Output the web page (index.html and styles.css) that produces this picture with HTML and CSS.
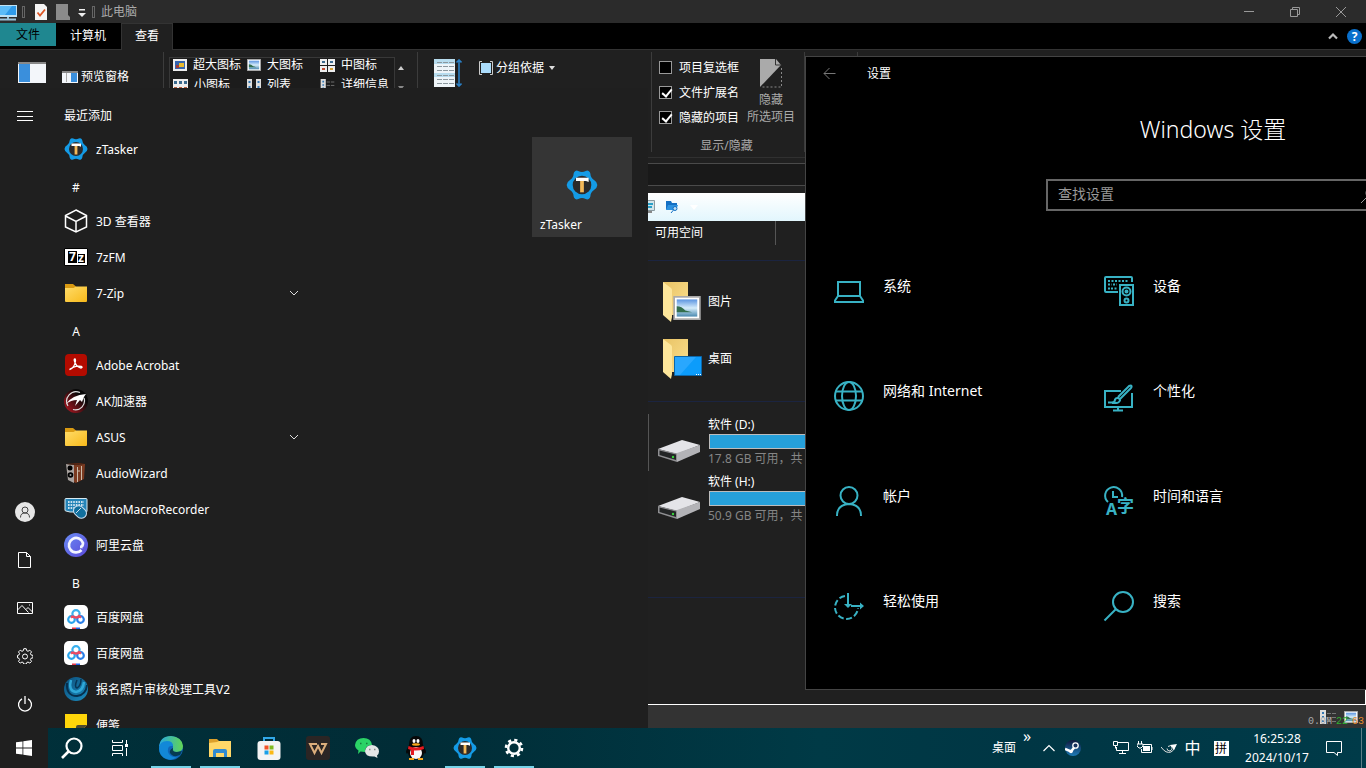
FILE: index.html
```html
<!DOCTYPE html>
<html lang="zh-CN">
<head>
  <meta charset="UTF-8" />
  <meta name="viewport" content="width=device-width, initial-scale=1.0" />
  <title>此电脑</title>
  <link rel="stylesheet" href="styles.css">
</head>
<body>

<!-- shared icons -->
<svg class="defs" aria-hidden="true">
  <defs>
    <linearGradient id="gFolder" x1="0" y1="0" x2="1" y2="1"><stop offset="0" stop-color="#ffdc69"/><stop offset="1" stop-color="#f7b91a"/></linearGradient>
    <linearGradient id="gBig" x1="0" y1="0" x2="1" y2="1"><stop offset="0" stop-color="#e9c365"/><stop offset="1" stop-color="#fbe08f"/></linearGradient>
    <linearGradient id="gSky" x1="0" y1="0" x2="0" y2="1"><stop offset="0" stop-color="#5b94e0"/><stop offset=".5" stop-color="#d5ecfa"/><stop offset="1" stop-color="#4b8ab0"/></linearGradient>
    <linearGradient id="gEdge" x1="0" y1="0" x2="1" y2="0"><stop offset="0" stop-color="#27a7e0"/><stop offset="1" stop-color="#63d653"/></linearGradient>
    <linearGradient id="gAli" x1="0" y1="0" x2="1" y2="1"><stop offset="0" stop-color="#6a8cf5"/><stop offset="1" stop-color="#5a48d8"/></linearGradient>
    <linearGradient id="gPhoto" x1="0" y1="0" x2="1" y2="1"><stop offset="0" stop-color="#0c4d78"/><stop offset="1" stop-color="#1b8ec2"/></linearGradient>
    <linearGradient id="gAk" x1="1" y1="0" x2="0" y2="1"><stop offset=".3" stop-color="#080808"/><stop offset="1" stop-color="#c01824"/></linearGradient>
    <linearGradient id="gSteam" x1="0" y1="0" x2="0" y2="1"><stop offset="0" stop-color="#10173c"/><stop offset="1" stop-color="#1d7cb8"/></linearGradient>
  </defs>
  <symbol id="ztasker" viewBox="0 0 24 24">
    <path fill="#149be6" d="M7 1.500q1-.6 2.200 0 2.800 1.500 5.600 0 1.200-.6 2.200 0 1.200.8 1.300 2 .1 3 2.700 4.700 2.300 1.300 2.500 3.800-.2 2.500-2.500 3.800-2.600 1.700-2.700 4.700-.1 1.200-1.300 2-1 .6-2.200 0-2.800-1.500-5.600 0-1.200.6-2.200 0-1.200-.8-1.300-2-.1-3-2.700-4.700Q.7 14.500.5 12q.2-2.500 2.500-3.800 2.600-1.700 2.700-4.700.1-1.200 1.300-2z"/>
    <circle cx="12" cy="12" r="7" fill="#2b2a2b"/>
    <rect x="10.600" y="9" width="2.800" height="8.500" fill="#f3b85a"/>
    <path fill="#fff" d="M7.500 6.500h9.500v3.200l-2-.7h-7.500z"/>
  </symbol>
  <symbol id="folder" viewBox="0 0 24 24">
    <path fill="#d99a12" d="M1 3h8l3 2.500v3H1z"/>
    <path fill="url(#gFolder)" d="M1 7h8.500l2.500-1.500h11V20q0 1-1 1H2q-1 0-1-1z"/>
  </symbol>
  <symbol id="baidu" viewBox="0 0 24 24">
    <rect width="24" height="24" rx="5" fill="#fff"/>
    <g fill="none" stroke-width="2.200">
      <circle cx="7.500" cy="14.500" r="3.300" stroke="#2aa5ec"/>
      <circle cx="16.500" cy="14.500" r="3.300" stroke="#2a7fe8"/>
      <circle cx="12" cy="8.700" r="3.600" stroke="#39b1ee"/>
      <path d="M9 11a3.700 3.700 0 0 0 6 0l2 1.500M9 11l-2 1.500" stroke="#ee4a62"/>
    </g>
    <path fill="#e8384a" d="M8 22.500h4V24H8z"/><path fill="#2468e8" d="M12 22.500h4V24h-4z"/>
  </symbol>
  <symbol id="chevron" viewBox="0 0 10 10"><path d="M1 3l4 4 4-4" fill="none" stroke="#ddd"/></symbol>
  <symbol id="drive" viewBox="0 0 42 24">
    <path fill="#e4e4e8" d="M0 10L24 1l18 5-23 9z"/>
    <path fill="#b3b3b7" d="M19 14l23-8v7l-23 10z"/>
    <path fill="#8f8f92" d="M0 10l19 4.500V23L0 17z"/>
    <path fill="#232526" d="M1.500 11.500L18 15.500v5.500L1.500 16z"/>
    <circle cx="15" cy="18" r="1.200" fill="#38d03a"/>
  </symbol>
  <symbol id="bigfolder" viewBox="0 0 40 42">
    <path fill="url(#gBig)" d="M1 1h25v33H9z"/>
    <path fill="#fde69b" d="M1 1l8 6q1 1 1 2v27l-1 5-8-7z"/>
  </symbol>
  <symbol id="picture" viewBox="0 0 16 14">
    <rect x=".5" y=".5" width="15" height="13" fill="#fff" stroke="#aaa"/>
    <rect x="2" y="2" width="12" height="10" fill="url(#gSky)"/>
    <path fill="#336e4c" d="M2 6q3 0 5 2.500l4 1H2z"/>
  </symbol>
  <symbol id="details" viewBox="0 0 16 14">
    <path fill="#ddd" d="M0 0h6v14H0z"/><path fill="#3478b4" d="M2 2h2v2H2zM2 6h2v2H2zM2 10h2v2H2z"/>
    <path stroke="#777" d="M7 3.500h4M12 3.500h4M7 7.500h4M12 7.500h4M7 11.500h4M12 11.500h4"/>
  </symbol>
</svg>

<div class="desktop">

  <!-- file explorer -->
  <section class="explorer">
    <header class="titlebar">
      <svg width="18" height="18" viewBox="0 0 18 18"><path fill="#bfe2f5" d="M0 2h17v12H0z"/><path fill="#2f9bea" d="M0 3h16v9H0z"/><path fill="#5cbcf8" d="M0 3h12L5 12H0z"/><path stroke="#9cc4da" stroke-width="2" d="M8 14v2M0 16.500h16"/></svg>
      <i class="grip"></i>
      <svg class="doc" width="14" height="16" viewBox="0 0 14 16"><path fill="#f5f5f5" d="M1 0h9l3 3v13H1z"/><path d="M3.500 8.500l2.500 3 5-6" fill="none" stroke="#de5726" stroke-width="1.800"/></svg>
      <svg class="doc2" width="14" height="16" viewBox="0 0 14 16"><path fill="#8b8b8b" d="M0 0h12v11l2 2v3H0z"/></svg>
      <svg class="qat" width="8" height="8" viewBox="0 0 8 8"><path fill="#eee" d="M1 0h6v1.500H1zM0 4h8L4 8z"/></svg>
      <i class="grip"></i>
      <span class="title">此电脑</span>
      <div class="controls">
        <button aria-label="最小化"><svg width="12" height="12"><path d="M1 5.500h10" stroke="#999"/></svg></button>
        <button aria-label="还原"><svg width="12" height="12"><path d="M1.500 3.500h7v7h-7zM3.500 3V1.500h7v7H9" fill="none" stroke="#999"/></svg></button>
        <button aria-label="关闭"><svg width="12" height="12"><path d="M1 1l10 10M11 1L1 11" stroke="#999"/></svg></button>
      </div>
    </header>

    <nav class="tabs">
      <button class="tab file">文件</button>
      <button class="tab computer">计算机</button>
      <button class="tab active">查看</button>
      <div class="help">
        <svg width="12" height="12"><path d="M2 8.500l4-4 4 4" fill="none" stroke="#bbb" stroke-width="2.200"/></svg>
        <span class="question">?</span>
      </div>
    </nav>

    <div class="ribbon">
      <div class="group panes">
        <svg class="navpane" width="28" height="21"><path fill="#f3f6fa" d="M0 0h28v21H0z"/><path fill="#888" d="M0 0h28v2H0z"/><path fill="#3a8fdc" d="M1 2h11v18H1z"/></svg>
        <button><svg width="16" height="12"><path fill="#f3f6fa" d="M0 0h16v12H0z"/><path fill="#888" d="M0 0h16v2H0z"/><path fill="#3a8fdc" d="M9 2h6v9H9z"/><path stroke="#aaa" d="M4.500 2v9"/></svg>预览窗格</button>
      </div>
      <div class="group layouts">
        <div class="gallery">
          <button><svg width="14" height="12"><path fill="#eee" d="M0 0h14v12H0z"/><path fill="#3464ae" d="M2 2h10v8H2z"/><path fill="#e8b92e" d="M6 4h5v4H6z"/><path fill="#a13a3a" d="M3 6h3v3H3z"/></svg>超大图标</button>
          <button><svg width="14" height="12"><use href="#picture"/></svg>大图标</button>
          <button><svg width="15" height="13"><path fill="#eee" d="M0 0h7v6H0zM8 0h7v6H8zM0 7h7v6H0zM8 7h7v6H8z"/><path fill="#3b6a8e" d="M2 2h3v2H2zM10 2h3v2h-3z"/><path fill="#c04b32" d="M2 9h3v2H2z"/><path fill="#d39b30" d="M10 9h3v2h-3z"/></svg>中图标</button>
          <button><svg width="15" height="13"><path fill="#eee" d="M0 0h15v13H0z"/><path fill="#3b6a8e" d="M1 2h3v3H1zM6 2h3v3H6zM11 2h3v3h-3z"/><path fill="#b75c3c" d="M1 8h3v3H1zM6 8h3v3H6zM11 8h3v3h-3z"/></svg>小图标</button>
          <button><svg width="14" height="12"><path fill="#ddd" d="M0 0h5v12H0zM9 0h5v12H9z"/><path fill="#3478b4" d="M1.500 2h2v2h-2zM1.500 7h2v2h-2zM10.500 2h2v2h-2zM10.500 7h2v2h-2z"/></svg>列表</button>
          <button><svg width="15" height="12"><use href="#details"/></svg>详细信息</button>
        </div>
        <div class="scroller"><svg width="6" height="4"><path fill="#ccc" d="M0 4l3-4 3 4z"/></svg><svg width="6" height="4"><path fill="#888" d="M0 0h6L3 4z"/></svg></div>
      </div>
      <div class="group view">
        <svg width="28" height="28"><path fill="#eef4f8" d="M0 0h21v28H0z"/><path fill="#b7dcee" d="M0 0h21v5H0zM0 14h21v4H0z"/><path stroke="#8b979d" stroke-dasharray="5 1" d="M3 3.500h17M3 7.500h17M3 11.500h17M3 16.500h17M3 20.500h17M3 24.500h17"/><path d="M25 2v24M22.500 3.500L25 1l2.500 2.500M22.500 24.500L25 27l2.500-2.500" stroke="#2a7fc4" stroke-width="1.600" fill="none"/></svg>
        <div class="stack">
          <button><svg width="14" height="14"><path d="M3 .5H.5v13H3M11 .5h2.500v13H11" fill="none" stroke="#ccc"/><path fill="#aadcfb" d="M2 2h10v10H2z"/></svg>分组依据<svg width="6" height="4"><path fill="#ddd" d="M0 0h6L3 4z"/></svg></button>
          <button><svg width="14" height="14"><path stroke="#aaa" stroke-width="2" d="M6 6h6M9 4v6"/></svg>添加列</button>
        </div>
      </div>
      <div class="group showhide">
        <div class="row">
          <div class="checks">
            <label><input type="checkbox">项目复选框</label>
            <label><input type="checkbox" checked>文件扩展名</label>
            <label><input type="checkbox" checked>隐藏的项目</label>
          </div>
          <button class="hide-items"><svg width="22" height="29"><path fill="#aaa" d="M0 0h16l5 6L0 28z"/><path fill="none" stroke="#333" d="M15.500 0v6h6"/><path d="M21.500 9v19H2" fill="none" stroke="#888" stroke-dasharray="2 2"/></svg><span>隐藏<br>所选项目</span></button>
        </div>
        <div class="caption">显示/隐藏</div>
      </div>
      <div class="group"></div>
    </div>

    <div class="address"></div>

    <div class="content">
      <aside class="navtree"></aside>
      <main class="files">
        <div class="toolbar">
          <svg width="7" height="14"><path fill="#d2e4ea" stroke="#8a9aa0" d="M-4 .5H6.500v10H-4z"/><path stroke="#2aa0c8" stroke-width="2" d="M0 4h5M0 7h4"/><path stroke="#888" stroke-width="2" d="M0 12h4"/></svg>
          <svg width="13" height="12"><path fill="#1470c4" d="M0 0h5l1 2h5v4H3L0 9z"/><path fill="#2d92e0" d="M2 4h10l-2 5H0z"/><circle cx="9" cy="7.500" r="2" fill="#bfe0f5" stroke="#1470c4"/><path stroke="#1470c4" d="M7.500 9L5 12"/></svg>
          <svg width="8" height="5"><path fill="#fff" d="M0 0h8L4 5z"/></svg>
        </div>
        <div class="colhead"><span>可用空间</span></div>
        <section class="items">
          <div class="item"><svg width="40" height="42"><use href="#bigfolder"/><use href="#picture" x="11" y="15" width="28" height="24"/></svg><span>图片</span></div>
          <div class="item"><svg width="40" height="42"><use href="#bigfolder"/><path fill="#0c9cfb" stroke="#0b67aa" d="M12.500 18.500h27v19h-27z"/><path fill="#36adff" d="M13 19h21L18 37h-5z" opacity=".7"/><path stroke="#fff" stroke-dasharray="1 1" d="M34 36.500h5"/></svg><span>桌面</span></div>
        </section>
        <section class="items drives">
          <div class="item"><svg width="42" height="24"><use href="#drive"/></svg><div class="info">软件 (D:)<div class="bar"></div><small>17.8 GB 可用，共</small></div></div>
          <div class="item"><svg width="42" height="24"><use href="#drive"/></svg><div class="info">软件 (H:)<div class="bar"></div><small>50.9 GB 可用，共</small></div></div>
        </section>
        <section class="items"></section>
      </main>
    </div>

    <footer class="status">
      <svg width="16" height="14"><use href="#details"/></svg>
      <svg width="14" height="12"><use href="#picture"/></svg>
    </footer>
  </section>

  <!-- settings window, runs past the right edge of the screen -->
  <section class="settings">
    <header>
      <button aria-label="返回"><svg width="13" height="13"><path d="M1 6.500h11.500M6.500 1L1 6.500 6.500 12" fill="none" stroke="#777"/></svg></button>
      <span>设置</span>
    </header>
    <h1>Windows 设置</h1>
    <div class="search">
      <input type="text" placeholder="查找设置" aria-label="查找设置">
      <svg width="16" height="16"><circle cx="10" cy="6" r="5" fill="none" stroke="#999"/><path d="M6 10L0 16" stroke="#999"/></svg>
    </div>
    <nav class="categories">
      <a href="#"><svg viewBox="0 0 30 30"><path d="M4 6h22v14H4zM4 20l-3 4.500V26h28v-1.500L26 20"/></svg>系统</a>
      <a href="#"><svg viewBox="0 0 30 30"><path d="M14 16H2q-1 0-1-1V2q0-1 1-1h25q1 0 1 1v4M16 9h13v20H16z"/><path d="M4 5h20M4 8.500h4M9 8.500h4M4 12.500h2M7 12.500h6" stroke-dasharray="2 1.500"/><circle cx="22.500" cy="15.500" r="4"/><circle cx="22.500" cy="15.500" r="1"/><circle cx="22.500" cy="24.500" r="2"/></svg>设备</a>
      <a href="#"><svg viewBox="0 0 30 30"><circle cx="15" cy="15" r="14"/><ellipse cx="15" cy="15" rx="7" ry="14"/><path d="M2 10.500h26M2 19.500h26"/></svg>网络和 Internet</a>
      <a href="#"><svg viewBox="0 0 30 30"><path d="M17 10H1v16h27V12M14 26v3.500M9 29.500h10M4 21.500h4q3 0 3-3 1-2 3-1.500t2 2.500q-1 2.500-4 2.500H8M14 16L25 5q2-1 2.500 0 .5 1-.5 2L16 18"/></svg>个性化</a>
      <a href="#"><svg viewBox="0 0 30 30"><circle cx="15" cy="9.500" r="8.500"/><path d="M3 30q0-11.500 12-12 12 .5 12 12"/></svg>帐户</a>
      <a href="#"><svg viewBox="0 0 30 30"><path d="M4 16A8.500 8.500 0 1 1 18 11M9 5v6h5"/><text x="2" y="29" font-size="16">A</text><text x="13" y="26" font-size="17">字</text></svg>时间和语言</a>
      <a href="#"><svg viewBox="0 0 30 30"><path d="M11 5A11.500 11.500 0 1 0 24 17" stroke-dasharray="6 2.500"/><path d="M14 2v13M17 15h12"/><path class="solid" d="M10 13h8l-4 4zM26 11.500v7l4-3.500z"/></svg>轻松使用</a>
      <a href="#"><svg viewBox="0 0 30 30"><circle cx="19" cy="11" r="10"/><path d="M12 18L.5 29.500"/></svg>搜索</a>
    </nav>
  </section>

  <!-- start menu -->
  <section class="start">
    <div class="rail">
      <button aria-label="展开"><svg width="16" height="16"><path d="M0 3.500h16M0 8.500h16M0 12.500h16" stroke="#fff"/></svg></button>
      <button class="user" aria-label="帐户"><svg width="20" height="20"><circle cx="10" cy="10" r="10" fill="#e6e6e6"/><circle cx="10" cy="8" r="3" fill="none" stroke="#444"/><path d="M5.500 15.500q0-4.500 4.500-4.500t4.500 4.500" fill="none" stroke="#444"/></svg></button>
      <button aria-label="文档"><svg width="16" height="16"><path d="M1.500.5h8l4 4v11h-12zM9.500.5v4h4" fill="none" stroke="#fff"/></svg></button>
      <button aria-label="图片"><svg width="16" height="16"><path d="M.5 2.500h15v11H.5zM.5 10l4.500-4.500 6.500 7M9 9.500l2-2 4.500 4.500M12 5h1" fill="none" stroke="#fff"/></svg></button>
      <button aria-label="设置"><svg width="16" height="16" viewBox="0 0 16 16" fill="none" stroke="#fff"><path d="M6.800.7h2.400l.5 2 1.300.6 1.800-1.100 1.700 1.700-1.100 1.800.6 1.200 2 .5v2.400l-2 .5-.6 1.300 1.100 1.800-1.700 1.700-1.800-1.100-1.300.6-.5 1.500H6.800l-.5-1.500-1.300-.6-1.800 1.100-1.700-1.700 1.100-1.800-.6-1.300-1.500-.5V7.400l1.500-.5.6-1.200-1.100-1.800 1.700-1.700L5 3.300l1.300-.6z"/><circle cx="8" cy="8.500" r="2.500"/></svg></button>
      <button aria-label="电源"><svg width="16" height="16"><path d="M5 2.800a6.500 6.500 0 1 0 6 0M8 0v8" fill="none" stroke="#fff" stroke-width="1.300"/></svg></button>
    </div>
    <div class="applist">
      <div class="letter recent">最近添加</div>
      <button><svg><use href="#ztasker"/></svg><span>zTasker</span></button>
      <div class="letter">#</div>
      <button><svg viewBox="0 0 24 24"><path d="M12 1l10.500 5.500v11.500L12 23 1.500 18V6.500zM1.500 7L12 12.500 22.500 7M12 12.500V23" fill="none" stroke="#fff" stroke-width="1.500"/></svg><span>3D 查看器</span></button>
      <button><svg viewBox="0 0 24 24"><path d="M.5 3.500h23v17H.5z" fill="#fff" stroke="#000"/><path d="M4 6h9v12H4z"/><path d="M14 9h7v9h-7z"/><text x="5" y="16" font-size="12" font-weight="bold" fill="#fff">7</text><text x="14" y="17" font-size="12" font-weight="bold" fill="#fff">z</text></svg><span>7zFM</span></button>
      <button><svg><use href="#folder"/></svg><span>7-Zip</span><svg class="chev"><use href="#chevron"/></svg></button>
      <div class="letter">A</div>
      <button><svg viewBox="0 0 24 24"><rect x="1" y="1" width="22" height="22" rx="4" fill="#b30b00"/><path d="M6 16.500q4.500-2 5.500-8.500 0-2.500-1-2-1 1 1 4.500 2 4 5.500 4.500 2-.5.500-1.500-4-1-8.500 1-3.500 1.500-3 2z" fill="none" stroke="#fff" stroke-width="1.300"/></svg><span>Adobe Acrobat</span></button>
      <button><svg viewBox="0 0 24 24"><circle cx="12" cy="12" r="12" fill="url(#gAk)"/><path d="M4 17A9.500 9.500 0 0 1 16 3.500M20 9A9 9 0 0 1 9 20.500" fill="none" stroke="#ddd" stroke-width="1.200"/><path d="M2 15Q8 6 22 5q-2 2-4 8l-2-2-5 6 2-6q-6 0-11 4z" fill="#fff"/></svg><span>AK加速器</span></button>
      <button><svg><use href="#folder"/></svg><span>ASUS</span><svg class="chev"><use href="#chevron"/></svg></button>
      <button><svg viewBox="0 0 24 24"><path fill="#a9a3a0" d="M2 3l8 1v18L4 19z"/><path fill="#7a3a20" d="M10 4l11-1-1 15-8 4-2-1z"/><path fill="#572613" d="M2 3l10-1h9l-9 2z"/><circle cx="6" cy="7" r="2.500"/><circle cx="6.500" cy="14" r="2.800"/><circle cx="6.500" cy="14" r="1" fill="#999"/><path stroke="#cba" d="M13.500 6v15M17.500 5v14M14 10h2"/></svg><span>AudioWizard</span></button>
      <button><svg viewBox="0 0 24 24"><path d="M2 1.500h20q1 0 1 1V14q0 1-1 1H6l-4-1q-1 0-1-1V2.500q0-1 1-1z" fill="#2584b8" stroke="#d8eaf2"/><path d="M4 5h16M4 8h16M4 11h10" stroke="#fff" stroke-width="1.600" stroke-dasharray="1.600 1"/><rect x="9" y="10" width="14" height="10" rx="5" transform="rotate(42 16 15)" fill="#116f9d" stroke="#cde"/><path d="M12 16l5-5" stroke="#cde"/></svg><span>AutoMacroRecorder</span></button>
      <button><svg viewBox="0 0 24 24"><circle cx="12" cy="12" r="12" fill="url(#gAli)"/><path d="M17.500 17A7.200 7.200 0 1 1 19 10q0 4-3 4h3" fill="none" stroke="#f2f4ff" stroke-width="2.700"/></svg><span>阿里云盘</span></button>
      <div class="letter">B</div>
      <button><svg><use href="#baidu"/></svg><span>百度网盘</span></button>
      <button><svg><use href="#baidu"/></svg><span>百度网盘</span></button>
      <button><svg viewBox="0 0 24 24"><circle cx="12" cy="12" r="12" fill="url(#gPhoto)"/><path d="M3 6q-1 13 10 13 9-1 10-11" fill="none" stroke="#06304e" stroke-width="2"/><path d="M7 3q-3 11 5 12 7-1 8-10" fill="none" stroke="#2fa8d8" stroke-width="2.500"/><path d="M13 3q-3 7 0 8 4-2 4-9" fill="none" stroke="#073656" stroke-width="1.500"/></svg><span>报名照片审核处理工具V2</span></button>
      <button><svg viewBox="0 0 24 24"><path fill="#ffd60a" d="M1 1h22v11l-11 11H1z"/><path fill="#4c4a30" d="M23 12H14q-2 0-2 2v9z"/></svg><span>便笺</span></button>
    </div>
    <div class="tiles">
      <button class="tile"><svg width="32" height="32"><use href="#ztasker"/></svg><span>zTasker</span></button>
    </div>
  </section>

  <footer class="taskbar">
    <button class="startbtn" aria-label="开始"><svg width="16" height="16"><path fill="#fff" d="M0 2.300L6.500 1.400v6.200H0zM7.300 1.200L16 0v7.600H7.300zM0 8.400h6.500v6.200L0 13.700zM7.300 8.400H16V16l-8.700-1.200z"/></svg></button>
    <button aria-label="搜索"><svg width="24" height="24"><circle cx="14" cy="10" r="7.500" fill="none" stroke="#fff" stroke-width="2.200"/><path d="M8.500 15.500L2 22" stroke="#fff" stroke-width="2.600"/></svg></button>
    <button aria-label="任务视图"><svg width="16" height="16"><path d="M.5 0v2.500h10V0M.5 5.500h10v5H.5zM.5 16v-2.500h10V16M14.500 0v4M14.500 8v8" fill="none" stroke="#fff"/><path fill="#fff" d="M13 4h3v3h-3z"/></svg></button>
    <div class="apps">
      <button class="open" aria-label="Edge"><svg viewBox="0 0 24 24"><circle cx="12" cy="12" r="12" fill="#0f66b8"/><path fill="url(#gEdge)" d="M0 11Q1 0 12 0q11 1 12 10 0 6-7 6-5 0-3-3 1-6-5-7-6 0-9 5z"/><path fill="#1288d8" d="M0 12q1-7 8-7 6 0 6 5-6-1-5 6 2 6 9 5-5 4-10 2-8-2-8-11z"/><path fill="#053541" d="M14 12q-1 4 4 4l5-1-2 4q-7 3-10-2-1-3 3-5z" opacity=".85"/></svg></button>
      <button class="open" aria-label="文件资源管理器"><svg viewBox="0 0 24 24"><path fill="#dca02b" d="M1 3h8l2 2v4H1z"/><path fill="#ffd768" d="M1 7l8-1 2-1h12v16H1z"/><path fill="#318bd0" d="M5 21v-6q0-2 2-2h10q2 0 2 2v6h-3v-4H8v4z"/></svg></button>
      <button aria-label="Microsoft Store"><svg viewBox="0 0 24 24"><path d="M7 6V2h10v4" fill="none" stroke="#32a8e8" stroke-width="2"/><rect x=".5" y="5" width="23" height="19" rx="3" fill="#f4f4f4"/><path fill="#f15328" d="M7.500 9.500h4v4h-4z"/><path fill="#7fba20" d="M12.500 9.500h4v4h-4z"/><path fill="#1aa0e8" d="M7.500 14.500h4v4h-4z"/><path fill="#fbb914" d="M12.500 14.500h4v4h-4z"/></svg></button>
      <button aria-label="WPS"><svg viewBox="0 0 24 24"><rect width="24" height="24" rx="3" fill="#2b2524"/><path d="M11 8H4l4.500 9L12 10l3.500 7L20 8h-5" fill="none" stroke="#dcae7c" stroke-width="2"/></svg></button>
      <button aria-label="微信"><svg viewBox="0 0 24 24"><path fill="#2bd366" d="M8.500 2Q16 2 17 9q-7 0-7 7l-4.500-.5L3 18l.5-3.500Q0 12 0 9q1-7 8.500-7z"/><path fill="#e3e6e6" d="M17 9q7 1 7 6.500 0 2.500-2 4l.5 2.500-3-1.500Q10 21 10 15q1-6 7-6z"/><path d="M5 7.500h1.500M11 7.500h1.500" stroke="#157d3d" stroke-width="1.500"/><path d="M14 13.500h1.500M19 13.500h1.500" stroke="#888" stroke-width="1.300"/></svg></button>
      <button aria-label="QQ"><svg viewBox="0 0 24 24"><path fill="#080808" d="M12 0q7 0 7 9l3 6q0 4-2 2-1 5-4 6H8q-3-1-4-6-2 2-2-2l3-6q0-9 7-9z"/><ellipse cx="12" cy="17" rx="6" ry="6" fill="#f8f8f8"/><ellipse cx="10" cy="5" rx="1.500" ry="2" fill="#fff"/><ellipse cx="14" cy="5" rx="1.500" ry="2" fill="#fff"/><ellipse cx="12" cy="8.500" rx="4" ry="1.200" fill="#f9a81c"/><path fill="#e41a20" d="M4.500 10q7.500 3 15 0l.5 3q-5 2-10 1.500V19H7v-5l-3-1z"/><path stroke="#f9a81c" stroke-width="2" d="M5 23h5M14 23h5"/></svg></button>
      <button class="open" aria-label="zTasker"><svg><use href="#ztasker"/></svg></button>
      <button class="open" aria-label="设置"><svg viewBox="0 0 24 24"><circle cx="12" cy="12" r="5.800" fill="none" stroke="#fff" stroke-width="2.400"/><circle cx="12" cy="12" r="8" fill="none" stroke="#fff" stroke-width="2.600" stroke-dasharray="3.140 3.140"/></svg></button>
    </div>
    <div class="tray">
      <span class="deskbar">桌面</span><span class="more">»</span>
      <button aria-label="显示隐藏的图标"><svg width="14" height="14"><path d="M1.500 10L7 4.500l5.500 5.500" fill="none" stroke="#fff" stroke-width="1.200"/></svg></button>
      <button class="steam" aria-label="Steam"><svg width="16" height="16"><circle cx="8" cy="8" r="8" fill="url(#gSteam)"/><path d="M0 9l6 2.500 4-5" fill="none" stroke="#fff" stroke-width="2.500"/><circle cx="10.500" cy="5.500" r="2.700" fill="#17305c" stroke="#fff" stroke-width="1.300"/><circle cx="6" cy="11.500" r="1.800" fill="#fff"/></svg></button>
      <button aria-label="网络"><svg width="16" height="16"><path d="M5 2.500h10.500v8h-12V7M9.500 10.500v3M6 13.500h7M.5 1.500h4v4h-4zM2.500 5.500v3" fill="none" stroke="#fff"/></svg></button>
      <button aria-label="电池"><svg width="16" height="16"><path d="M6 4.500h8.500v8H4.500V9M15 7v3M1.500 1v3M4.500 1v3M0 4h6v2L4 8H2L0 6z" fill="none" stroke="#fff"/><path fill="#fff" d="M6 6h7v5H6z"/></svg></button>
      <button aria-label="音频"><svg width="16" height="16"><path d="M0 7q5 7 10 5 3-1 4-6M7 6.500q3-2 4 .5t-2 4q-3 0-3-2.500" fill="none" stroke="#ddd"/><path fill="#fff" d="M9 5l7-1-3 6-2-3z"/></svg></button>
      <button class="ime">中</button>
      <button class="pinyin"><span>拼</span></button>
      <button class="clock">16:25:28<br>2024/10/17</button>
      <button class="notice" aria-label="通知"><svg width="18" height="18"><path d="M1.500 2.500h15v11h-4v3l-3.500-3H1.500z" fill="none" stroke="#fff"/></svg></button>
      <i class="peek"></i>
    </div>
  </footer>

  <div class="meter"><span>0.0M</span><b>22</b><em>63</em></div>
</div>

</body>
</html>
```

FILE: styles.css
```css
* {
  box-sizing: border-box;
}

body {
  margin: 0;
  font-family: "Noto Sans", "Noto Sans CJK SC", sans-serif;
  font-size: 12px;
  line-height: 16px;
  color: #fff;
  background: #000;
}

button {
  font: inherit;
  color: inherit;
  background: none;
  border: none;
  padding: 0;
  display: flex;
  align-items: center;
  white-space: nowrap;
}

svg {
  flex: none;
  display: block;
}

.defs {
  position: absolute;
  width: 0;
  height: 0;
}

.desktop {
  position: relative;
  display: flex;
  flex-direction: column;
  height: 100vh;
  overflow: hidden;
}

/* explorer */
.explorer {
  flex: 1;
  min-height: 0;
  display: flex;
  flex-direction: column;
  background: #202020;
}

.titlebar {
  display: flex;
  align-items: center;
  height: 23px;
  background: #2b2b2b;
}

.grip {
  width: 3px;
  height: 12px;
  margin: 0 4px;
  border: 1px solid #666;
}

.doc {
  margin-left: 5px;
}

.doc2 {
  margin-left: 8px;
}

.qat {
  margin: 3px 2px 0 8px;
}

.title {
  margin-left: 2px;
  color: #aaa;
}

.controls {
  display: flex;
  margin-left: auto;
  margin-right: 2px;
}

.controls button {
  width: 46px;
  height: 20px;
  justify-content: center;
}

.tabs {
  display: flex;
  height: 27px;
  background: #000;
  border-bottom: 1px solid #333;
}

.tab {
  justify-content: center;
  width: 52px;
  height: 25px;
}

.tab.file {
  width: 56px;
  height: 23px;
  background: #1f8790;
  color: #000;
}

.tab.computer {
  width: 64px;
  margin-right: 1px;
}

.tab.active {
  height: 27px;
  padding-bottom: 3px;
  background: #202020;
  border: 1px solid #333;
  border-bottom: none;
}

.help {
  display: flex;
  align-items: center;
  gap: 8px;
  margin-left: auto;
  margin-right: 4px;
}

.question {
  width: 15px;
  height: 15px;
  line-height: 15px;
  border-radius: 50%;
  background: #0a70cc;
  text-align: center;
  font-weight: bold;
}

.ribbon {
  display: flex;
  height: 108px;
  padding-top: 2px;
  border-bottom: 1px solid #303030;
}

.group {
  display: flex;
  height: 100px;
  border-right: 1px solid #3c3c3c;
}

.group:last-child {
  width: 53px;
}

.group button {
  gap: 3px;
}

.panes {
  width: 164px;
  padding: 10px 0 0 18px;
  gap: 16px;
}

.panes button {
  height: 29px;
}

.layouts {
  width: 254px;
  padding: 5px 0 0 5px;
}

.gallery {
  display: grid;
  grid-template-columns: 74px 73px 74px;
  grid-auto-rows: 20px;
  width: 226px;
  padding: 0 3px;
  align-content: start;
  border: 1px solid #383838;
  border-bottom: none;
  background: #1c1c1c;
  overflow: hidden;
}

.gallery button {
  height: 14px;
  gap: 6px;
}

.scroller {
  display: flex;
  flex-direction: column;
  gap: 16px;
  padding: 9px 0 0 3px;
}

.view {
  width: 234px;
  padding: 7px 0 0 16px;
  gap: 17px;
}

.stack {
  display: flex;
  flex-direction: column;
  gap: 11px;
  padding-top: 1px;
}

.stack button svg:last-child:not(:first-child) {
  margin-left: 2px;
}

.showhide {
  width: 153px;
  flex-direction: column;
  padding: 3px 0 0 7px;
}

.row {
  display: flex;
  gap: 8px;
}

.checks label {
  display: flex;
  align-items: center;
  height: 25px;
  gap: 7px;
  white-space: nowrap;
}

.checks input {
  appearance: none;
  width: 13px;
  height: 13px;
  margin: 0;
  border: 1px solid #999;
  background: #000;
}

.checks input:checked::after {
  content: "";
  display: block;
  width: 4px;
  height: 8px;
  margin: 0 0 0 4px;
  border: solid #fff;
  border-width: 0 2px 2px 0;
  transform: rotate(40deg);
}

.hide-items {
  flex-direction: column;
  padding-top: 4px;
  color: #aaa;
  line-height: 17px;
}

.caption {
  margin-top: 8px;
  padding-right: 10px;
  text-align: center;
  color: #aaa;
}

.address {
  height: 23px;
  margin: 5px 0 7px;
  background: #191919;
  border: solid #4a4a4a;
  border-width: 1px 0;
}

.content {
  flex: 1;
  min-height: 0;
  display: flex;
}

.navtree {
  width: 648px;
  flex: none;
}

.files {
  flex: 1;
  border-right: 1px solid #fff;
}

.toolbar {
  display: flex;
  align-items: center;
  gap: 11px;
  height: 28px;
  background: linear-gradient(#fff, #e2f6fd);
}

.colhead {
  height: 24px;
  width: 128px;
  padding: 4px 7px;
  border-right: 1px solid #555;
}

.items {
  min-height: 141px;
  padding: 12px 0 0 14px;
  border-top: 1px solid #1b2440;
}

.colhead + .items {
  margin-top: 15px;
}

.item {
  display: flex;
  align-items: center;
  gap: 6px;
  height: 57px;
}

.drives {
  height: 196px;
  padding-left: 0;
}

.drives .item {
  gap: 8px;
  padding-left: 9px;
  border-left: 1px solid transparent;
}

.drives .item:first-child {
  border-color: #555;
}

.drives .item > svg {
  margin-top: 16px;
}

.info {
  padding-bottom: 2px;
}

.bar {
  width: 200px;
  height: 15px;
  margin: 1px 0 2px 1px;
  background: #26a0da;
  border: 1px solid #bcbcbc;
}

.info small {
  font-size: 12px;
  color: #858585;
}

.status {
  display: flex;
  justify-content: flex-end;
  align-items: center;
  gap: 8px;
  height: 24px;
  padding-right: 8px;
  background: #333;
  border-top: 1px solid #fff;
}

/* settings */
.settings {
  position: absolute;
  left: 805px;
  top: 56px;
  bottom: 78px;
  width: 816px;
  background: #000;
  border: 1px solid #444;
}

.settings header {
  display: flex;
  align-items: center;
  gap: 31px;
  height: 33px;
  padding-left: 17px;
}

.settings h1 {
  margin: 23px 0 33px;
  font-size: 23px;
  font-weight: 300;
  line-height: 33px;
  text-align: center;
}

.search {
  position: relative;
  width: 334px;
  margin: 0 auto;
}

.search input {
  display: block;
  width: 100%;
  height: 32px;
  padding: 0 10px 4px;
  font: inherit;
  font-size: 14px;
  color: #fff;
  background: #000;
  border: 2px solid #666;
}

.search input::placeholder {
  color: #999;
}

.search svg {
  position: absolute;
  right: 3px;
  top: 8px;
}

.categories {
  display: grid;
  grid-template-columns: 270px 270px;
  grid-auto-rows: 105px;
  padding: 65px 28px 0;
}

.categories a {
  display: flex;
  align-items: flex-start;
  gap: 19px;
  font-size: 14px;
  line-height: 20px;
  color: #fff;
  text-decoration: none;
}

.categories svg {
  width: 30px;
  height: 30px;
  overflow: visible;
  fill: none;
  stroke: #38b2c4;
  stroke-width: 2;
}

.categories text,
.categories .solid {
  fill: #38b2c4;
  stroke: none;
}

.categories text {
  font-weight: bold;
}

/* start menu */
.start {
  position: absolute;
  left: 0;
  top: 88px;
  bottom: 40px;
  width: 648px;
  display: flex;
  background: #1f1f1f;
  overflow: hidden;
}

.rail {
  display: flex;
  flex-direction: column;
  width: 48px;
  padding-top: 4px;
}

.rail button {
  height: 48px;
  padding-left: 17px;
}

.rail .user {
  margin-top: auto;
  padding-left: 15px;
}

.applist {
  width: 260px;
  padding: 7px 0 0 16px;
}

.applist button {
  width: 100%;
  height: 36px;
  gap: 8px;
}

.applist span {
  padding-top: 2px;
}

.applist svg {
  width: 24px;
  height: 24px;
}

.applist .chev {
  width: 10px;
  height: 10px;
  margin-left: auto;
  margin-right: 9px;
}

.letter {
  width: 24px;
  height: 36px;
  padding-top: 13px;
  text-align: center;
}

.letter.recent {
  width: auto;
  text-align: left;
}

.tiles {
  margin-left: auto;
  padding: 49px 16px 0 0;
}

.tile {
  flex-direction: column;
  justify-content: space-between;
  width: 100px;
  height: 100px;
  padding: 32px 8px 4px;
  background: #353535;
}

.tile span {
  align-self: flex-start;
}

/* taskbar */
.taskbar {
  display: flex;
  height: 40px;
  background: linear-gradient(90deg, #00303a, #012c36 30%, #003a46 60%, #003644 75%, #003b49);
}

.taskbar button {
  justify-content: center;
  width: 48px;
  height: 40px;
}

.taskbar .startbtn {
  background: #1f1f1f;
}

.apps {
  display: flex;
  gap: 1px;
  margin-left: 3px;
}

.apps svg {
  width: 24px;
  height: 24px;
}

.apps .open {
  background: linear-gradient(#76d3e8, #76d3e8) center bottom / 40px 2px no-repeat;
}

.tray {
  display: flex;
  align-items: center;
  margin-left: auto;
}

.tray button {
  width: 24px;
}

.more {
  align-self: flex-start;
  width: 21px;
  padding-left: 7px;
  font-size: 16px;
}

.tray .steam {
  margin-right: 24px;
}

.tray .ime {
  font-size: 16px;
  width: 23px;
}

.tray .pinyin {
  width: 34px;
}

.pinyin span {
  width: 15px;
  height: 15px;
  line-height: 15px;
  color: #000;
  background: #fff;
}

.tray .clock {
  width: 78px;
  line-height: 19px;
}

.tray .notice {
  width: 36px;
}

.peek {
  width: 5px;
  height: 40px;
  margin-left: 9px;
  border-left: 1px solid #5c7f87;
}

/* traffic meter floating over the corner */
.meter {
  position: absolute;
  right: 2px;
  bottom: 38px;
  display: flex;
  gap: 4px;
  font: 10px/16px "Liberation Mono", monospace;
  color: #aaa;
}

.meter b {
  font-weight: normal;
  color: #2fae2f;
}

.meter em {
  font-style: normal;
  color: #e88a2a;
}
```
